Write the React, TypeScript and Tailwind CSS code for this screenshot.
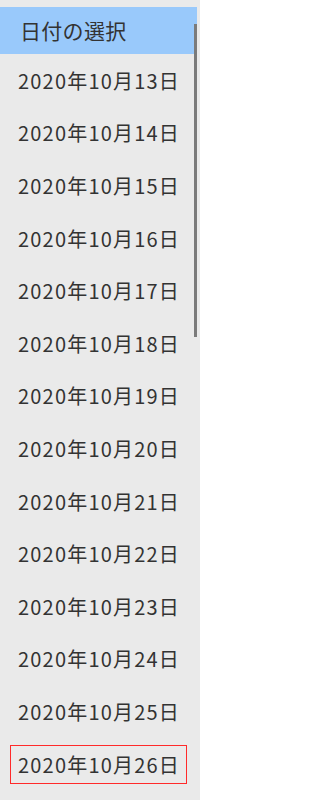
import React from "react";

const days = [13, 14, 15, 16, 17, 18, 19, 20, 21, 22, 23, 24, 25, 26];

export default function App() {
  return (
    <div
      className="relative w-[200px] h-[800px] overflow-hidden bg-[#eaeaea] text-[#333333]"
      style={{ fontFamily: '"Noto Sans CJK JP", "Noto Sans", sans-serif' }}
    >
      <div className="pt-[7px] pr-[3px]">
        <div className="h-[47px] bg-[#99c9fb] flex items-center pl-[20px] text-[21px] leading-none tracking-[0.3px]">
          日付の選択
        </div>
        {days.map((d) => (
          <div key={d} className="h-[52.6px] flex items-center pt-[1px]">
            {d === 26 ? (
              <div className="ml-[10px] w-[177px] h-[39px] border border-[#ff2a2a] flex items-center pl-[7px] text-[20px] leading-none tracking-[1.2px]">
                2020年10月{d}日
              </div>
            ) : (
              <div className="pl-[18px] text-[20px] leading-none tracking-[1.2px]">
                2020年10月{d}日
              </div>
            )}
          </div>
        ))}
      </div>
      <div className="absolute left-[194px] top-[24px] w-[2.5px] h-[313px] bg-[#7b7b7b]" />
    </div>
  );
}
